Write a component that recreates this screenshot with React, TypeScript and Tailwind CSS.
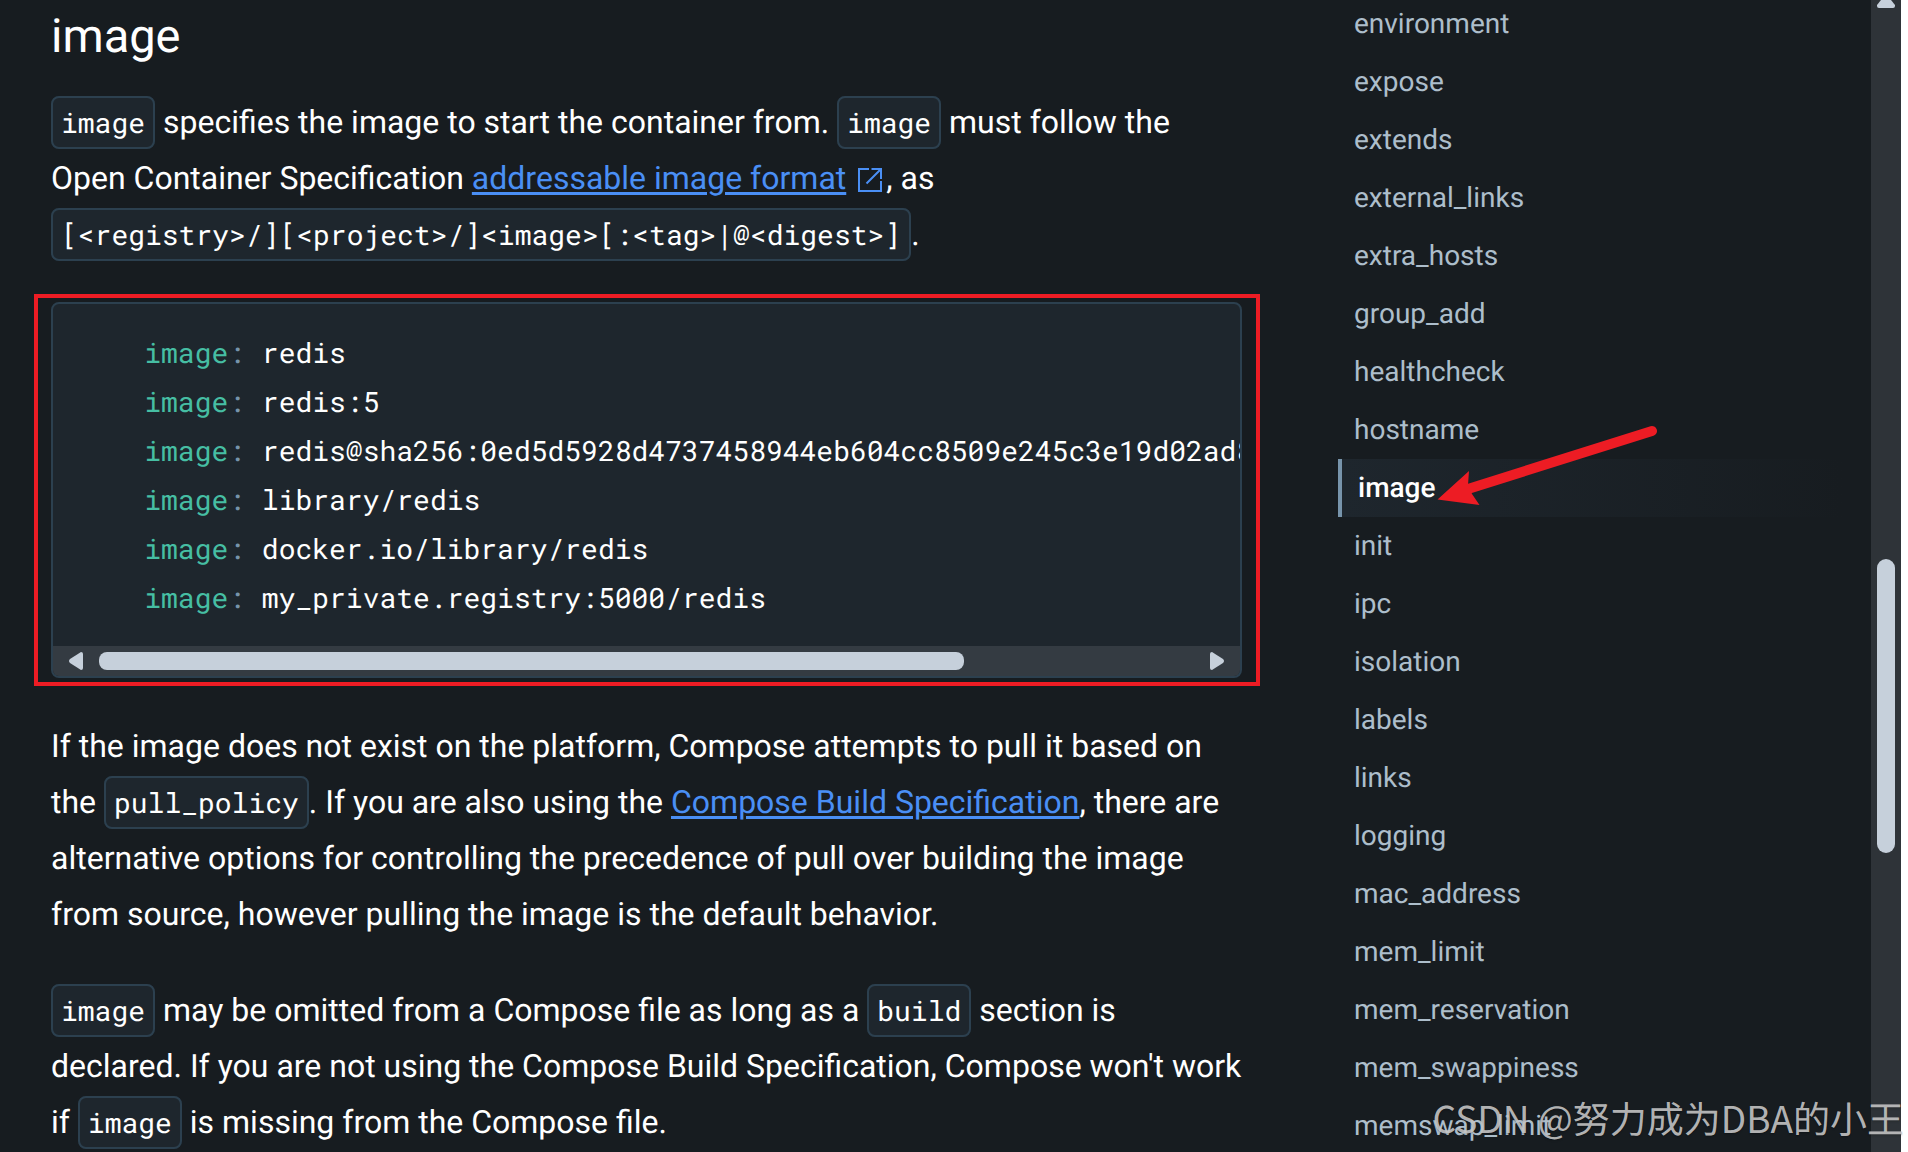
const tocItems = [
  "environment",
  "expose",
  "extends",
  "external_links",
  "extra_hosts",
  "group_add",
  "healthcheck",
  "hostname",
  "image",
  "init",
  "ipc",
  "isolation",
  "labels",
  "links",
  "logging",
  "mac_address",
  "mem_limit",
  "mem_reservation",
  "mem_swappiness",
  "memswap_limit",
];

const imageExamples = [
  "redis",
  "redis:5",
  "redis@sha256:0ed5d5928d4737458944eb604cc8509e245c3e19d02ad83935398bc4b991aac7",
  "library/redis",
  "docker.io/library/redis",
  "my_private.registry:5000/redis",
];

function Code({ children }: { children: string }) {
  return (
    <code className="rounded-lg border-2 border-[#2c404f] bg-[#1e262d] px-2 py-1.5 font-['Roboto_Mono','Liberation_Mono',monospace] text-[28px] leading-none whitespace-nowrap">
      {children}
    </code>
  );
}

function DocLink({ children }: { children: string }) {
  return (
    <a href="#" className="text-[#4a8ff5] underline decoration-[3px] underline-offset-[3px]">
      {children}
    </a>
  );
}

function ExternalIcon() {
  return (
    <svg
      viewBox="0 0 24 24"
      className="mr-1 ml-3 inline-block size-6 align-[-3px]"
      fill="none"
      stroke="#4a8ff5"
      strokeWidth="2"
    >
      <path d="M11 1H1v22h22V13M13.500 1H23v10M23 1 8.500 15.500" />
    </svg>
  );
}

function CodeBlock() {
  return (
    <div className="relative my-10">
      {/* red marker frame around the example */}
      <div className="pointer-events-none absolute -top-2 -right-[18px] -bottom-2 -left-[17px] border-4 border-[#ed1c24]" />
      <div className="overflow-hidden rounded-lg border-2 border-[#2c404f] bg-[#1e262d]">
        <pre className="overflow-hidden p-6 pr-0 font-['Roboto_Mono','Liberation_Mono',monospace] text-[28px] leading-[49px]">
          {imageExamples.map((value) => (
            <div key={value}>
              {"    "}
              <span className="text-[#46bea3]">image</span>
              <span className="text-[#7794ab]">:</span> {value}
            </div>
          ))}
        </pre>
        <div className="flex h-[30px] items-center bg-[#343b42] px-4">
          <button aria-label="Scroll left">
            <svg viewBox="0 0 14 18" className="h-[18px] w-3.5" fill="#c6d0db">
              <path d="M14 2v14q0 2-2 2L1 11q-2-2 0-4L12 0q2 0 2 2z" />
            </svg>
          </button>
          <div className="mx-4 flex-1">
            <div className="h-[18px] w-[79%] rounded-lg bg-[#c6d0db]" />
          </div>
          <button aria-label="Scroll right">
            <svg viewBox="0 0 14 18" className="h-[18px] w-3.5" fill="#c6d0db">
              <path d="M0 2v14q0 2 2 2l11-7q2-2 0-4L2 0Q0 0 0 2z" />
            </svg>
          </button>
        </div>
      </div>
    </div>
  );
}

function TableOfContents() {
  return (
    <nav className="relative -mt-[5px] w-[533px] shrink-0 pr-7 text-[28px] leading-[58px]">
      <ul>
        {tocItems.map((item) =>
          item === "image" ? (
            <li key={item}>
              <a
                href="#"
                className="block border-l-4 border-[#7794ab] bg-linear-to-r from-[#1e262d] to-transparent pl-4 font-medium text-white"
              >
                {item}
              </a>
            </li>
          ) : (
            <li key={item}>
              <a href="#" className="block pl-4 text-[#adbecb]">
                {item}
              </a>
            </li>
          )
        )}
      </ul>
      {/* red arrow pointing at the current entry */}
      <svg
        viewBox="0 0 222 82"
        className="pointer-events-none absolute top-[429px] left-[98px] h-[82px] w-[222px]"
      >
        <path d="M32 65 216 7" stroke="#ed1c24" strokeWidth="10" strokeLinecap="round" />
        <path d="M1.500 75.500 33 47 32 61 36 70 43.500 81z" fill="#ed1c24" />
      </svg>
    </nav>
  );
}

function PageScrollbar() {
  return (
    <div className="w-[37px] shrink-0 border-r-[7px] border-white bg-[#2e3338] px-1.5">
      <svg viewBox="0 0 18 8" className="h-2 w-[18px]" fill="#c6d0db">
        <path d="M4 0h10l4 5v1q0 2-2 2H2Q0 8 0 6V5z" />
      </svg>
      <div className="mt-[551px] h-[294px] rounded-full bg-[#c6d0db]" />
    </div>
  );
}

export default function App() {
  return (
    <div className="relative flex h-screen overflow-hidden bg-[#171c20] font-['Roboto',sans-serif] text-white [text-rendering:geometricPrecision]">
      <main className="mr-24 ml-[51px] min-w-0 flex-1 text-[32px] leading-[56px]">
        <h2 className="mt-[9px] mb-[29px] text-[47px] leading-[56px]">image</h2>
        <p>
          <Code>image</Code> specifies the image to start the container from.{" "}
          <Code>image</Code> must follow the Open Container Specification{" "}
          <DocLink>addressable image format</DocLink>
          <ExternalIcon />, as <Code>{"[<registry>/][<project>/]<image>[:<tag>|@<digest>]"}</Code>.
        </p>
        <CodeBlock />
        <p>
          If the image does not exist on the platform, Compose attempts to pull it based on the{" "}
          <Code>pull_policy</Code>. If you are also using the{" "}
          <DocLink>Compose Build Specification</DocLink>, there are alternative options for
          controlling the precedence of pull over building the image from source, however pulling
          the image is the default behavior.
        </p>
        <p className="mt-10">
          <Code>image</Code> may be omitted from a Compose file as long as a <Code>build</Code>{" "}
          section is declared. If you are not using the Compose Build Specification, Compose won't
          work if <Code>image</Code> is missing from the Compose file.
        </p>
      </main>
      <TableOfContents />
      <PageScrollbar />
      <div className="pointer-events-none absolute right-1 bottom-2.5 font-['Noto_Sans_CJK_SC',sans-serif] text-[37px] leading-[50px] whitespace-nowrap text-[#c8c8c8]/90 text-shadow-sm">
        CSDN @努力成为DBA的小王
      </div>
    </div>
  );
}
